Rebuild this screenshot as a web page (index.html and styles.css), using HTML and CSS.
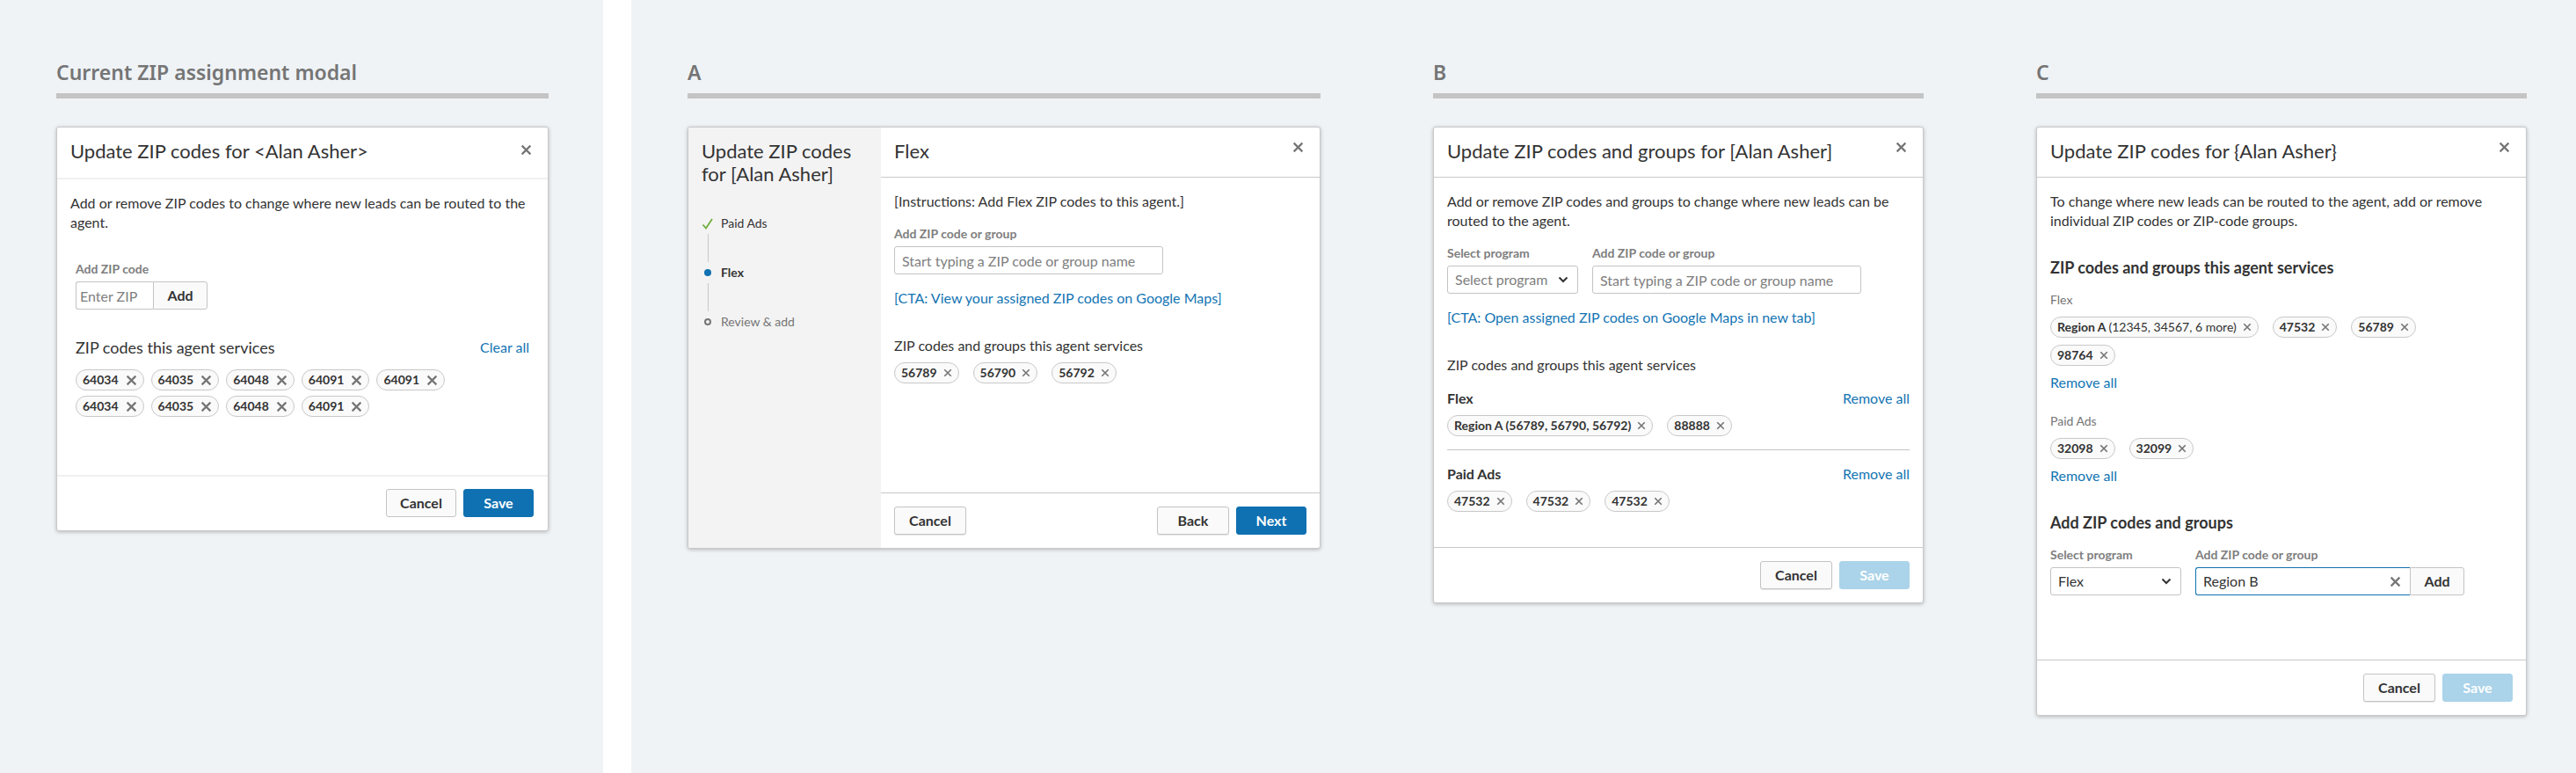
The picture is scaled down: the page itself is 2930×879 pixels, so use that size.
FILE: index.html
```html
<!DOCTYPE html>
<html lang="en">
<head>
<meta charset="utf-8">
<title>ZIP assignment modal options</title>
<link rel="stylesheet" href="styles.css">
</head>
<body>
<svg class="sprite" aria-hidden="true">
  <symbol id="x" viewBox="0 0 12 12"><path d="M1.5 1.5l9 9M10.5 1.5l-9 9" fill="none" stroke="currentColor" stroke-width="2"/></symbol>
  <symbol id="chevron" viewBox="0 0 12 8"><path d="M1.5 1.5L6 6l4.500-4.500" fill="none" stroke="currentColor" stroke-width="2"/></symbol>
</svg>
<main class="board">
  <div class="zone zone-current">
    <section class="option">
      <h1 class="option-name">Current ZIP assignment modal</h1>
      <article class="modal modal-legacy">
        <header class="modal-head">
          <h2 class="modal-title">Update ZIP codes for &lt;Alan Asher&gt;</h2>
          <button class="close" aria-label="Close"><svg><use href="#x"/></svg></button>
        </header>
        <div class="modal-body">
          <p class="text">Add or remove ZIP codes to change where new leads can be routed to the agent.</p>
          <div class="legacy-content">
            <div class="field">
              <label class="label" for="zip0">Add ZIP code</label>
              <div class="joined"><input class="input input-zip" id="zip0" type="text" placeholder="Enter ZIP"><button class="btn btn-join">Add</button></div>
            </div>
            <div class="row legacy-row"><h3 class="subtitle-lg">ZIP codes this agent services</h3><a class="link" href="#clear">Clear all</a></div>
            <ul class="chips chips-tight">
              <li class="chip">64034<button class="chip-x" aria-label="Remove 64034"><svg><use href="#x"/></svg></button></li>
              <li class="chip">64035<button class="chip-x" aria-label="Remove 64035"><svg><use href="#x"/></svg></button></li>
              <li class="chip">64048<button class="chip-x" aria-label="Remove 64048"><svg><use href="#x"/></svg></button></li>
              <li class="chip">64091<button class="chip-x" aria-label="Remove 64091"><svg><use href="#x"/></svg></button></li>
              <li class="chip">64091<button class="chip-x" aria-label="Remove 64091"><svg><use href="#x"/></svg></button></li>
              <li class="chip">64034<button class="chip-x" aria-label="Remove 64034"><svg><use href="#x"/></svg></button></li>
              <li class="chip">64035<button class="chip-x" aria-label="Remove 64035"><svg><use href="#x"/></svg></button></li>
              <li class="chip">64048<button class="chip-x" aria-label="Remove 64048"><svg><use href="#x"/></svg></button></li>
              <li class="chip">64091<button class="chip-x" aria-label="Remove 64091"><svg><use href="#x"/></svg></button></li>
            </ul>
          </div>
        </div>
        <footer class="modal-foot"><button class="btn">Cancel</button><button class="btn btn-primary">Save</button></footer>
      </article>
    </section>
  </div>

  <div class="zone zone-options">
    <section class="option">
      <h1 class="option-name">A</h1>
      <article class="modal modal-wizard">
        <aside class="side">
          <h2 class="modal-title">Update ZIP codes for [Alan Asher]</h2>
          <ol class="steps">
            <li class="step"><svg class="step-icon done" viewBox="0 0 14 14"><path d="M1.500 8.500L5 12.500 12 2" fill="none" stroke="currentColor" stroke-width="1.800"/></svg>Paid Ads</li>
            <li class="step current"><svg class="step-icon" viewBox="0 0 14 14"><circle cx="7" cy="7" r="4" fill="currentColor"/></svg>Flex</li>
            <li class="step next"><svg class="step-icon" viewBox="0 0 14 14"><circle cx="7" cy="7" r="3" fill="none" stroke="currentColor" stroke-width="2"/></svg>Review &amp; add</li>
          </ol>
        </aside>
        <div class="pane">
          <header class="modal-head">
            <h2 class="modal-title">Flex</h2>
            <button class="close" aria-label="Close"><svg><use href="#x"/></svg></button>
          </header>
          <div class="modal-body">
            <p class="text">[Instructions: Add Flex ZIP codes to this agent.]</p>
            <div class="field">
              <label class="label" for="zipA">Add ZIP code or group</label>
              <input class="input" id="zipA" type="text" placeholder="Start typing a ZIP code or group name">
            </div>
            <a class="link map-link" href="#maps">[CTA: View your assigned ZIP codes on Google Maps]</a>
            <h3 class="subtitle">ZIP codes and groups this agent services</h3>
            <ul class="chips">
              <li class="chip">56789<button class="chip-x" aria-label="Remove 56789"><svg><use href="#x"/></svg></button></li>
              <li class="chip">56790<button class="chip-x" aria-label="Remove 56790"><svg><use href="#x"/></svg></button></li>
              <li class="chip">56792<button class="chip-x" aria-label="Remove 56792"><svg><use href="#x"/></svg></button></li>
            </ul>
          </div>
          <footer class="modal-foot"><button class="btn btn-start">Cancel</button><button class="btn">Back</button><button class="btn btn-primary">Next</button></footer>
        </div>
      </article>
    </section>

    <section class="option">
      <h1 class="option-name">B</h1>
      <article class="modal">
        <header class="modal-head">
          <h2 class="modal-title">Update ZIP codes and groups for [Alan Asher]</h2>
          <button class="close" aria-label="Close"><svg><use href="#x"/></svg></button>
        </header>
        <div class="modal-body body-b">
          <p class="text">Add or remove ZIP codes and groups to change where new leads can be routed to the agent.</p>
          <div class="fields">
            <div class="field">
              <label class="label" for="progB">Select program</label>
              <div class="select-wrap"><select class="select empty" id="progB"><option>Select program</option><option>Flex</option><option>Paid Ads</option></select><svg class="chevron"><use href="#chevron"/></svg></div>
            </div>
            <div class="field">
              <label class="label" for="zipB">Add ZIP code or group</label>
              <input class="input" id="zipB" type="text" placeholder="Start typing a ZIP code or group name">
            </div>
          </div>
          <a class="link map-link" href="#maps">[CTA: Open assigned ZIP codes on Google Maps in new tab]</a>
          <h3 class="subtitle">ZIP codes and groups this agent services</h3>
          <div class="group">
            <div class="row"><h4 class="group-name">Flex</h4><a class="link" href="#remove">Remove all</a></div>
            <ul class="chips">
              <li class="chip">Region A (56789, 56790, 56792)<button class="chip-x" aria-label="Remove Region A"><svg><use href="#x"/></svg></button></li>
              <li class="chip">88888<button class="chip-x" aria-label="Remove 88888"><svg><use href="#x"/></svg></button></li>
            </ul>
          </div>
          <div class="group">
            <div class="row"><h4 class="group-name">Paid Ads</h4><a class="link" href="#remove">Remove all</a></div>
            <ul class="chips">
              <li class="chip">47532<button class="chip-x" aria-label="Remove 47532"><svg><use href="#x"/></svg></button></li>
              <li class="chip">47532<button class="chip-x" aria-label="Remove 47532"><svg><use href="#x"/></svg></button></li>
              <li class="chip">47532<button class="chip-x" aria-label="Remove 47532"><svg><use href="#x"/></svg></button></li>
            </ul>
          </div>
        </div>
        <footer class="modal-foot"><button class="btn">Cancel</button><button class="btn btn-primary" disabled>Save</button></footer>
      </article>
    </section>

    <section class="option">
      <h1 class="option-name">C</h1>
      <article class="modal">
        <header class="modal-head">
          <h2 class="modal-title">Update ZIP codes for {Alan Asher}</h2>
          <button class="close" aria-label="Close"><svg><use href="#x"/></svg></button>
        </header>
        <div class="modal-body body-c">
          <p class="text">To change where new leads can be routed to the agent, add or remove individual ZIP codes or ZIP-code groups.</p>
          <h3 class="section-title">ZIP codes and groups this agent services</h3>
          <div class="program">
            <h4 class="program-name">Flex</h4>
            <ul class="chips chips-narrow">
              <li class="chip"><span>Region A <span class="light">(12345, 34567, 6 more)</span></span><button class="chip-x" aria-label="Remove Region A"><svg><use href="#x"/></svg></button></li>
              <li class="chip">47532<button class="chip-x" aria-label="Remove 47532"><svg><use href="#x"/></svg></button></li>
              <li class="chip">56789<button class="chip-x" aria-label="Remove 56789"><svg><use href="#x"/></svg></button></li>
              <li class="chip">98764<button class="chip-x" aria-label="Remove 98764"><svg><use href="#x"/></svg></button></li>
            </ul>
            <a class="link" href="#remove">Remove all</a>
          </div>
          <div class="program">
            <h4 class="program-name">Paid Ads</h4>
            <ul class="chips">
              <li class="chip">32098<button class="chip-x" aria-label="Remove 32098"><svg><use href="#x"/></svg></button></li>
              <li class="chip">32099<button class="chip-x" aria-label="Remove 32099"><svg><use href="#x"/></svg></button></li>
            </ul>
            <a class="link" href="#remove">Remove all</a>
          </div>
          <h3 class="section-title">Add ZIP codes and groups</h3>
          <div class="fields">
            <div class="field">
              <label class="label" for="progC">Select program</label>
              <div class="select-wrap"><select class="select" id="progC"><option>Flex</option><option>Paid Ads</option></select><svg class="chevron"><use href="#chevron"/></svg></div>
            </div>
            <div class="field">
              <label class="label" for="zipC">Add ZIP code or group</label>
              <div class="joined">
                <div class="combo"><input class="combo-input" id="zipC" type="text" value="Region B"><button class="clear" aria-label="Clear text"><svg><use href="#x"/></svg></button></div>
                <button class="btn btn-join">Add</button>
              </div>
            </div>
          </div>
        </div>
        <footer class="modal-foot"><button class="btn">Cancel</button><button class="btn btn-primary" disabled>Save</button></footer>
      </article>
    </section>
  </div>
</main>
</body>
</html>
```
FILE: styles.css
```css
* { box-sizing: border-box; }
body {
  margin: 0;
  background: #fff;
  color: #333;
  font: 400 16px/22px Lato, "Open Sans", sans-serif;
}
h1, h2, h3, h4, p, ul, ol { margin: 0; padding: 0; font-weight: 400; }
ul, ol { list-style: none; }
button, input, select { font: inherit; color: inherit; margin: 0; }
svg { display: block; }
.sprite { position: absolute; width: 0; height: 0; }

.board {
  display: grid;
  grid-template-columns: 686fr 2212fr;
  gap: 32px;
  min-height: 100vh;
}
.zone { background: #eff3f6; padding: 66px 64px; }
.zone-current { padding-right: 62px; }
.zone-options {
  display: grid;
  grid-template-columns: 720fr 558fr 558fr;
  gap: 128px;
  align-items: start;
  padding-right: 56px;
}
.option-name {
  margin-bottom: 32px;
  border-bottom: 6px solid #c4c4c4;
  padding-bottom: 8px;
  color: #757575;
  font: 600 23px/32px "Noto Sans", sans-serif;
}

.modal {
  border: 1px solid #c8c8c8;
  border-radius: 3px;
  background: #fff;
  box-shadow: 0 1px 4px rgba(0, 0, 0, .25);
  overflow: hidden;
}
.modal-head {
  display: flex;
  justify-content: space-between;
  align-items: flex-start;
  padding: 12px 15px 16px;
  border-bottom: 1px solid #c8c8c8;
}
.modal-title { margin-top: 2px; font-size: 22px; line-height: 26px; }
.close {
  display: grid;
  place-items: center;
  width: 20px;
  height: 20px;
  border: 0;
  padding: 0;
  background: none;
  color: #757575;
}
.close svg { width: 13px; height: 13px; }
.modal-body { padding: 16px 15px; }
.body-b { padding-bottom: 40px; }
.body-c { padding-bottom: 73px; }
.modal-foot {
  display: flex;
  justify-content: flex-end;
  gap: 8px;
  padding: 15px;
  border-top: 1px solid #c8c8c8;
}

.label {
  display: block;
  margin-bottom: 6px;
  color: #7e7e7e;
  font-size: 14px;
  font-weight: 700;
  line-height: 16px;
}
.fields { display: flex; gap: 16px; margin-top: 18px; }
.text + .field { margin-top: 18px; }
.input, .select, .combo {
  display: block;
  height: 32px;
  border: 1px solid #c4c4c4;
  border-radius: 3px;
  padding: 0 8px;
  background: #fff;
}
.input { width: 306px; }
.input::placeholder { color: #7e7e7e; opacity: 1; }
.select-wrap { display: grid; align-items: center; width: 149px; }
.select { grid-area: 1 / 1; width: 100%; appearance: none; }
.select.empty { color: #7e7e7e; }
.chevron { grid-area: 1 / 1; justify-self: end; width: 12px; height: 8px; margin-right: 11px; pointer-events: none; }
.joined { display: flex; }
.combo {
  display: flex;
  align-items: center;
  width: 244px;
  border-color: #0f71b1;
  border-right: 0;
  border-radius: 3px 0 0 3px;
}
.combo-input { flex: 1; min-width: 0; border: 0; padding: 0; outline: 0; background: none; }
.clear { border: 0; padding: 2px; background: none; color: #757575; }
.clear svg { width: 13px; height: 13px; }

.btn {
  min-width: 82px;
  height: 32px;
  border: 1px solid #c4c4c4;
  border-radius: 3px;
  padding: 0 8px;
  background: #fafafa;
  font-weight: 700;
  box-shadow: 0 1px 1px rgba(0, 0, 0, .1);
}
.btn-start { margin-right: auto; }
.btn-primary { min-width: 80px; border-color: #0f71b1; background: #0f71b1; color: #fff; box-shadow: none; }
.btn-primary:disabled { border-color: #abd3e9; background: #abd3e9; }
.btn-join { min-width: 62px; border-radius: 0 3px 3px 0; box-shadow: none; }

.link { color: #1374b3; text-decoration: none; }
.map-link { display: block; margin-top: 16px; }
.row { display: flex; justify-content: space-between; }
.subtitle { margin: 32px 0 8px; font-size: 16px; }
.group-name { font-weight: 700; font-size: 16px; }
.group { margin-top: 16px; }
.group + .group { margin-top: 15px; border-top: 1px solid #c4c4c4; padding-top: 16px; }
.group .chips { margin-top: 8px; }
.section-title { margin: 31px 0 18px; font-size: 18px; font-weight: 700; }
.program + .program { margin-top: 25px; }
.program-name { margin-bottom: 11px; color: #757575; font-size: 14px; line-height: 16px; }
.program .link { display: block; margin-top: 8px; }
.section-title + .fields { margin-top: 0; }

.chips { display: flex; flex-wrap: wrap; gap: 8px 16px; }
.chips-narrow { max-width: 80%; }
.chips-tight { gap: 6px 8px; max-width: 90%; }
.chip {
  display: flex;
  align-items: center;
  gap: 7px;
  height: 24px;
  border: 1px solid #c8c8c8;
  border-radius: 12px;
  padding: 0 7px;
  background: #fafafa;
  font-size: 14px;
  font-weight: 700;
}
.light { font-weight: 400; }
.chip-x { border: 0; padding: 0; background: none; color: #757575; }
.chip-x svg { width: 10px; height: 10px; }

.modal-legacy .modal-head { padding-bottom: 17px; border-bottom: 2px solid #f0f0f0; }
.modal-legacy .close { height: 26px; }
.modal-legacy .modal-body { min-height: 336px; }
.modal-legacy .modal-foot { border-top: 2px solid #f0f0f0; padding: 14px 16px 15px; }
.modal-legacy .btn { box-shadow: none; }
.modal-legacy .modal-foot .btn { min-width: 80px; }
.modal-legacy .chip { gap: 8px; }
.modal-legacy .chip-x svg { width: 13px; height: 13px; }
.legacy-content { padding: 34px 6px 0; }
.input-zip { width: 88px; border-radius: 3px 0 0 3px; border-right: 0; padding: 0 4px; }
.legacy-row { margin: 32px 0 14px; }
.subtitle-lg { font-size: 18px; }

.modal-wizard { display: grid; grid-template-columns: 219px 1fr; }
.modal-wizard .modal-body { min-height: 358px; }
.side { background: #f3f3f3; padding: 12px 15px; }
.steps { margin-top: 33px; font-size: 14px; }
.step { position: relative; display: flex; align-items: center; gap: 8px; height: 20px; }
.step + .step { margin-top: 36px; }
.step-icon { width: 14px; height: 14px; overflow: visible; }
.done { color: #6fae3c; }
.current { font-weight: 700; }
.current .step-icon { color: #0f71b1; }
.next { color: #757575; }
.step + .step::before {
  content: "";
  position: absolute;
  left: 7px;
  bottom: 22px;
  width: 1px;
  height: 32px;
  background: #c8c8c8;
}
```
